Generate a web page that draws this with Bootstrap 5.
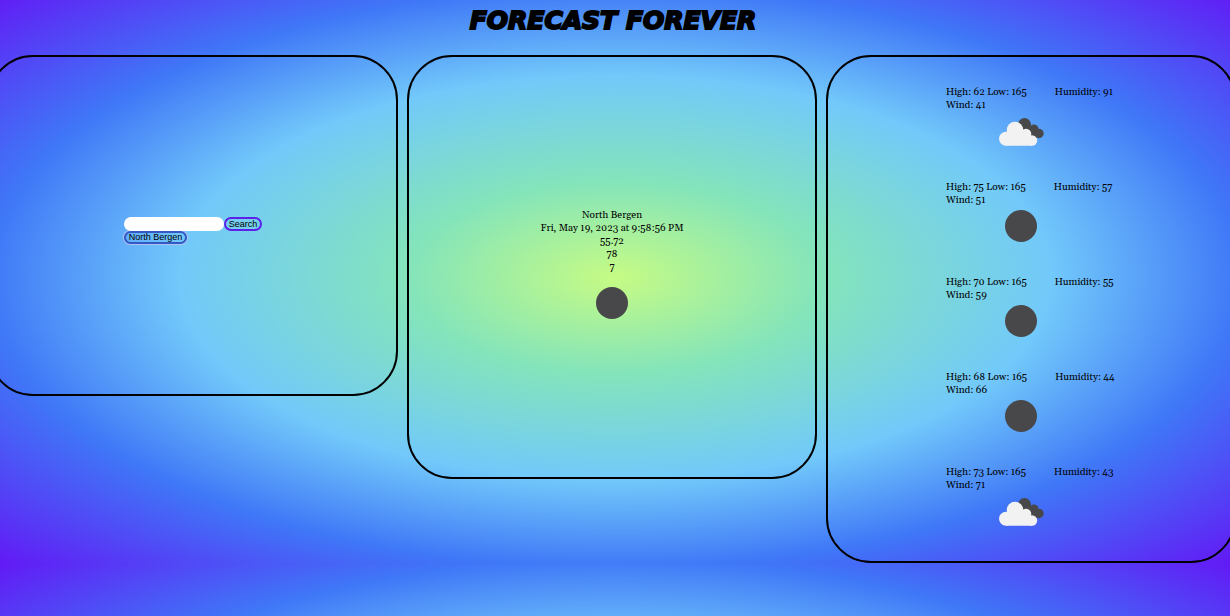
<!DOCTYPE html>
<html lang="en">
<head>
<meta charset="utf-8">
<meta name="viewport" content="width=device-width, initial-scale=1">
<title>Forecast Forever</title>
<link href="https://cdn.jsdelivr.net/npm/bootstrap@5.3.0/dist/css/bootstrap.min.css" rel="stylesheet">
<style>
  body {
    background: radial-gradient(#c6fb84, #83e4bb 24%, #72c9fa 50%, #3f77f7 72%, #621af5) 0 -8px / 100% calc(100% + 8px);
    color: #000;
    font: 10px/13px Georgia, Gelasio, "Liberation Serif", serif;
  }
  .site-title {
    font: italic 700 25px/24px "DejaVu Sans", sans-serif;
    padding: 9px 4px 22px 0;
    -webkit-text-stroke: 2px #000;
  }
  .panels { gap: 9px; padding-right: 6px; }
  .panel { flex: 0 0 33.3333vw; border: 2px solid #000; border-radius: 45px; }
  .panel-search { padding: 160px 0 150px; }
  .panel-today { padding: 152px 0 147px; }
  .panel-days { padding-top: 29px; }
  .search-form { font: 9px/10px "Liberation Sans", Arial, sans-serif; }
  .search-form button {
    border: 2px solid #5b21ea;
    border-radius: 7px;
    background: transparent;
    color: #000;
    height: 14px;
    padding: 0 3px;
  }
  .search-form .recent { border-color: #3459c4; box-shadow: 0 0 1px 1px #b4c3ee; height: 13px; line-height: 9px; }
  .search-form input { width: 100px; height: 14px; border: 0; border-radius: 7px; padding: 0 6px; }
  .day { width: 170px; }
  .day .icon-row { padding-right: 20px; }
  .humidity { margin-left: 28px; }
</style>
</head>
<body>
<svg class="d-none" aria-hidden="true">
  <symbol id="clear" viewBox="0 0 64 60"><circle cx="32" cy="30" r="16" fill="#48484a"/></symbol>
  <symbol id="clouds" viewBox="0 0 64 60">
    <g fill="#48484a"><circle cx="35.500" cy="23.500" r="6.500"/><circle cx="45" cy="28" r="4.500"/><circle cx="50" cy="32.500" r="4.700"/><path d="M30 26l10-3 8 9 0 5-10 0z"/></g>
    <g fill="#f2f2f2"><circle cx="17" cy="37.700" r="7"/><circle cx="26" cy="29" r="8.300"/><circle cx="37" cy="33" r="5.300"/><circle cx="43" cy="39.500" r="5.200"/><path d="M17 31l18-2 8 8v7.700H17z"/></g>
  </symbol>
</svg>
<header class="text-center"><h1 class="site-title m-0">FORECAST FOREVER</h1></header>
<main class="panels d-flex justify-content-center align-items-start overflow-hidden">
  <section class="panel panel-search d-flex justify-content-center">
    <form class="search-form">
      <div class="d-flex"><input type="text" aria-label="City"><button type="button">Search</button></div>
      <button type="button" class="recent d-block">North Bergen</button>
    </form>
  </section>
  <section class="panel panel-today text-center">
    <div>North Bergen</div>
    <div>Fri, May 19, 2023 at 9:58:56 PM</div>
    <div>55.72</div>
    <div>78</div>
    <div>7</div>
    <svg class="d-block mx-auto" width="64" height="56" viewBox="0 1 64 56" role="img" aria-label="Clear"><use href="#clear" width="64" height="60"/></svg>
  </section>
  <section class="panel panel-days d-flex flex-column align-items-center">
    <article class="day"><div class="text-nowrap">High: 62 Low: 165<span class="humidity">Humidity: 91</span></div><div>Wind: 41</div>
      <div class="icon-row"><svg class="d-block mx-auto" width="64" height="69" viewBox="0 11 64 69"><use href="#clouds" width="64" height="60"/></svg></div></article>
    <article class="day"><div class="text-nowrap">High: 75 Low: 165<span class="humidity">Humidity: 57</span></div><div>Wind: 51</div>
      <div class="icon-row"><svg class="d-block mx-auto" width="64" height="69" viewBox="0 11 64 69"><use href="#clear" width="64" height="60"/></svg></div></article>
    <article class="day"><div class="text-nowrap">High: 70 Low: 165<span class="humidity">Humidity: 55</span></div><div>Wind: 59</div>
      <div class="icon-row"><svg class="d-block mx-auto" width="64" height="69" viewBox="0 11 64 69"><use href="#clear" width="64" height="60"/></svg></div></article>
    <article class="day"><div class="text-nowrap">High: 68 Low: 165<span class="humidity">Humidity: 44</span></div><div>Wind: 66</div>
      <div class="icon-row"><svg class="d-block mx-auto" width="64" height="69" viewBox="0 11 64 69"><use href="#clear" width="64" height="60"/></svg></div></article>
    <article class="day"><div class="text-nowrap">High: 73 Low: 165<span class="humidity">Humidity: 43</span></div><div>Wind: 71</div>
      <div class="icon-row"><svg class="d-block mx-auto" width="64" height="69" viewBox="0 11 64 69"><use href="#clouds" width="64" height="60"/></svg></div></article>
  </section>
</main>
<script src="https://cdn.jsdelivr.net/npm/bootstrap@5.3.0/dist/js/bootstrap.bundle.min.js"></script>
</body>
</html>
